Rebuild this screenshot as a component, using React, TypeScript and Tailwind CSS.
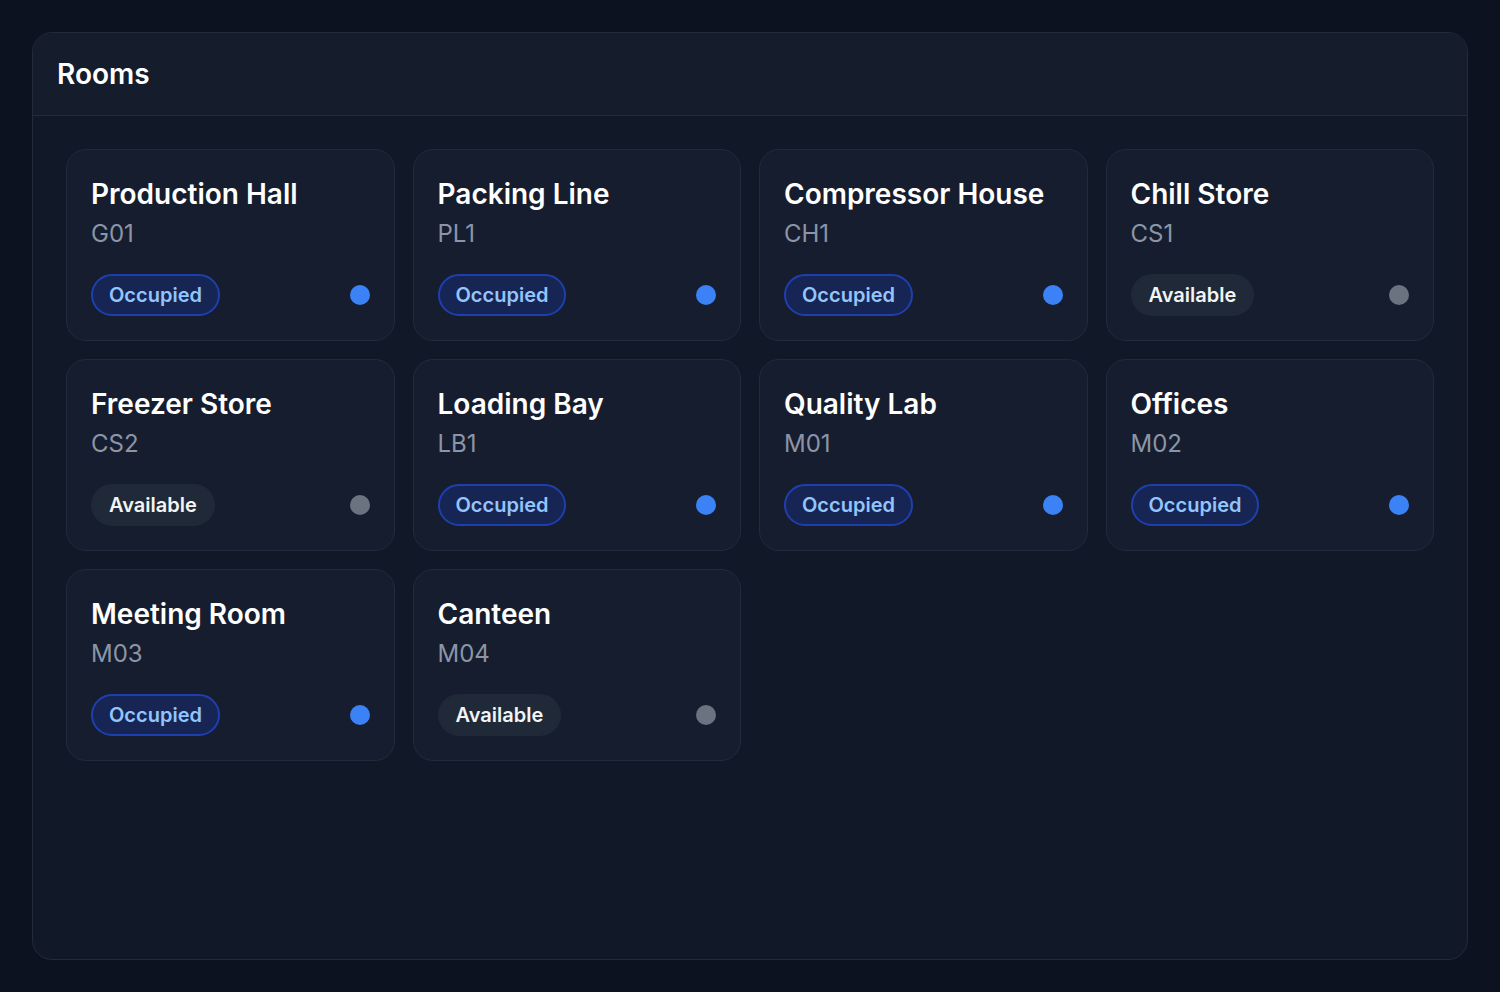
import React from "react";

type RoomStatus = "occupied" | "available";

interface Room {
  name: string;
  code: string;
  status: RoomStatus;
}

const rooms: Room[] = [
  { name: "Production Hall", code: "G01", status: "occupied" },
  { name: "Packing Line", code: "PL1", status: "occupied" },
  { name: "Compressor House", code: "CH1", status: "occupied" },
  { name: "Chill Store", code: "CS1", status: "available" },
  { name: "Freezer Store", code: "CS2", status: "available" },
  { name: "Loading Bay", code: "LB1", status: "occupied" },
  { name: "Quality Lab", code: "M01", status: "occupied" },
  { name: "Offices", code: "M02", status: "occupied" },
  { name: "Meeting Room", code: "M03", status: "occupied" },
  { name: "Canteen", code: "M04", status: "available" },
];

const badgeClass: Record<RoomStatus, string> = {
  occupied: "border-[#1e40af] bg-[#172554] text-[#93c5fd]",
  available: "border-[#1f2937] bg-[#1f2937] text-gray-100",
};

const dotClass: Record<RoomStatus, string> = {
  occupied: "bg-[#3b82f6]",
  available: "bg-[#6b7280]",
};

function RoomCard({ room }: { room: Room }) {
  return (
    <div className="rounded-[20px] border border-[#222b3c] bg-[#161d2e] p-6">
      <p className="text-[28px] leading-10 font-semibold text-white">{room.name}</p>
      <p className="mt-1 text-2xl leading-8 text-[#8b95a7]">{room.code}</p>
      <div className="mt-6 flex items-center justify-between">
        <span
          className={`inline-flex rounded-full border-2 px-4 py-[5px] text-xl leading-7 font-semibold ${badgeClass[room.status]}`}
        >
          {room.status === "occupied" ? "Occupied" : "Available"}
        </span>
        <span className={`h-5 w-5 rounded-full ${dotClass[room.status]}`} aria-hidden="true" />
      </div>
    </div>
  );
}

export default function App() {
  return (
    <div
      className="flex h-screen bg-[#0c1220] p-8"
      style={{ fontFamily: "Inter, 'Noto Sans', sans-serif" }}
    >
      <section className="flex flex-1 flex-col overflow-hidden rounded-[20px] border border-[#222b3c] bg-[#111827]">
        <header className="border-b border-[#222b3c] bg-[#151c2c] px-6 py-[23px]">
          <h2 className="text-[28px] leading-9 font-semibold text-white">Rooms</h2>
        </header>
        <div className="grid grid-cols-4 content-start gap-[18px] p-[33px]">
          {rooms.map((room) => (
            <RoomCard key={room.code} room={room} />
          ))}
        </div>
      </section>
    </div>
  );
}
